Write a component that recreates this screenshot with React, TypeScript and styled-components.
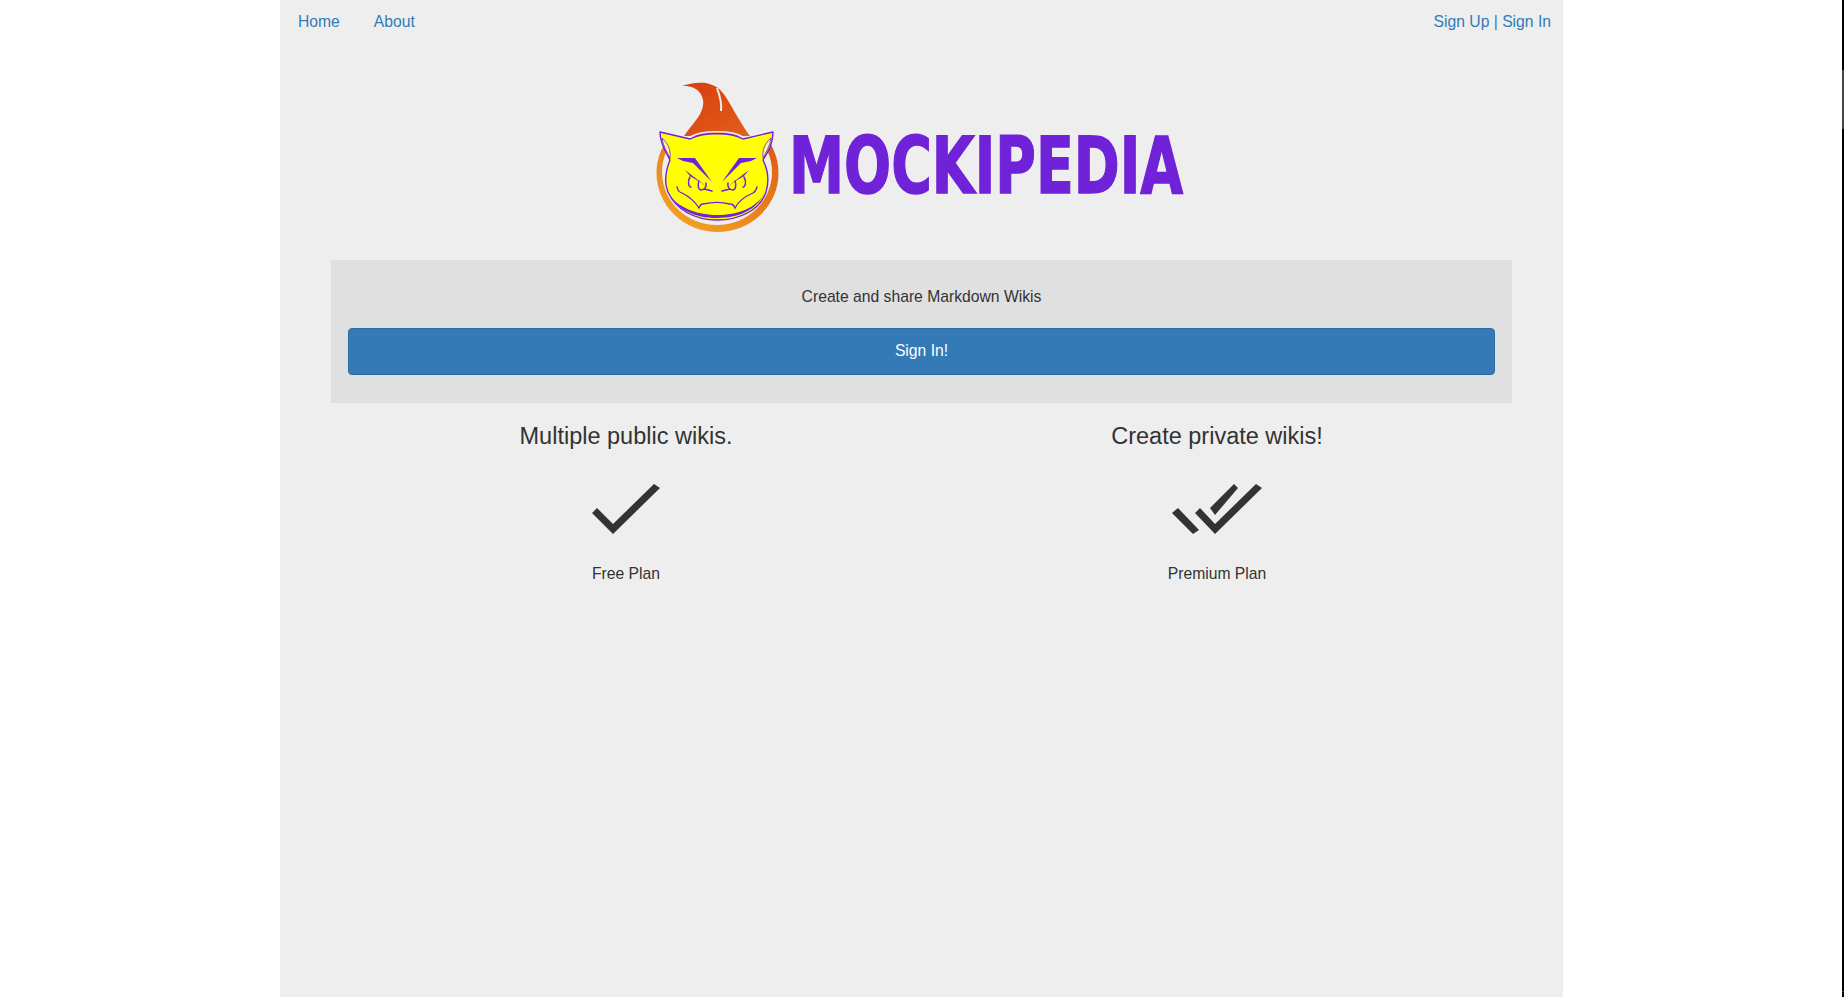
import React from "react";
import styled, { createGlobalStyle } from "styled-components";

const GlobalStyle = createGlobalStyle`
  html, body {
    margin: 0;
    padding: 0;
    background: #fff;
    overflow: hidden;
  }
  body {
    font-family: "Liberation Sans", Arial, sans-serif;
    font-size: 15.7px;
    line-height: 1.43;
    color: #333;
  }
`;

const Mascot = () => (
  <svg width="160" height="170" viewBox="0 0 160 170">
    <defs>
      <linearGradient id="flame" x1="0" y1="0" x2="1" y2="1">
        <stop offset="0" stopColor="#d83c0c" />
        <stop offset="1" stopColor="#e2601a" />
      </linearGradient>
      <linearGradient id="ring" x1="0.2" y1="1" x2="0.9" y2="0">
        <stop offset="0" stopColor="#f2a524" />
        <stop offset="1" stopColor="#dd4f12" />
      </linearGradient>
      <clipPath id="ringClip">
        <rect x="0" y="72" width="160" height="98" />
      </clipPath>
    </defs>
    <g clipPath="url(#ringClip)">
      <ellipse cx="77.5" cy="103" rx="61" ry="59" fill="url(#ring)" />
      <ellipse cx="77" cy="102" rx="55" ry="53" fill="#eee" />
    </g>
    <path
      d="M42 16 C48 14 58 12 66 13 C71 14 75 16 78 18 C88 26 94 44 110 66 L44 66 C54 52 61 46 63 36 C65 26 58 15 42 16 Z"
      fill="url(#flame)"
    />
    <path d="M77 18 C80 26 82 33 81 41" stroke="#eee" strokeWidth="2" fill="none" />
    <path
      d="M20 62 L50 69 C62 62 92 62 103 69 L133 62 C133 75 127 83 123 90 C128 100 129 112 126 122 C120 140 100 150 77 150 C55 150 36 140 28 122 C25 115 24 105 30 90 C28 85 20 75 20 62 Z"
      fill="#ffff00"
      stroke="#6f22d8"
      strokeWidth="1.4"
      strokeLinejoin="round"
    />
    <path d="M50 67 C62 60 92 60 103 67" fill="none" stroke="#f4f0fa" strokeWidth="1.5" />
    <path
      d="M27 120 C36 140 55 148 77 148 C100 148 118 140 126 120 C120 136 100 145 77 145 C55 145 34 136 27 120 Z"
      fill="#6f22d8"
    />
    <path d="M22 68 C23 76 27 82 30 88 C31 82 29 74 22 68 Z" fill="#fff7a0" stroke="#6f22d8" strokeWidth="0.8" />
    <path d="M131 68 C130 76 126 82 123 88 C122 82 124 74 131 68 Z" fill="#fff7a0" stroke="#6f22d8" strokeWidth="0.8" />
    <g fill="#6f22d8">
      <path d="M37 88 L55 88 L72 112 L53 93 L43 91 Z" />
      <path d="M117 88 L99 88 L82 112 L101 93 L111 91 Z" />
      <path d="M45 100 L71 120 L60 112 L50 106 Z" />
      <path d="M109 100 L83 120 L94 112 L104 106 Z" />
    </g>
    <g fill="none" stroke="#6f22d8" strokeLinecap="round">
      <path d="M50 107 C47 112 49 117 51 117" strokeWidth="1.5" />
      <path d="M104 107 C107 112 105 117 103 117" strokeWidth="1.5" />
      <path d="M59 111 C57 116 59 120 61 120 C65 120 67 116 66 113 M64 119 L72 121" strokeWidth="1.5" />
      <path d="M95 111 C97 116 95 120 93 120 C89 120 87 116 88 113 M90 119 L82 121" strokeWidth="1.5" />
      <path d="M37 117 C38 121 39 122 42 123 C48 126 54 130 59 138 C60 135 61 134 63 134 C72 132 82 132 90 134 C93 134 94 135 95 138 C99 130 106 126 113 123 C115 122 116 121 117 117" strokeWidth="1.3" />
    </g>
  </svg>
);

const Check = () => (
  <svg width="68" height="50" viewBox="0 0 68 50">
    <polygon fill="#333" points="0,29 5,24 21,40 62,0 68,4 21,50" />
  </svg>
);

const DoubleCheck = () => (
  <svg width="90" height="50" viewBox="0 0 90 50">
    <g fill="#333">
      <polygon points="0,29 6,24 27,46 21,50" />
      <polygon points="23,29 28,24 43,40 84,0 90,4 43,50" />
      <polygon points="38,24 62,0 66,4 43,31" />
    </g>
  </svg>
);

const App = () => {
  return (
    <>
      <GlobalStyle />
      <Page>
        <Container>
          <Nav>
            <NavLinks>
              <NavLink href="#">Home</NavLink>
              <NavLink href="#">About</NavLink>
            </NavLinks>
            <AuthLinks>
              <NavLink href="#">Sign Up</NavLink> | <NavLink href="#">Sign In</NavLink>
            </AuthLinks>
          </Nav>
          <LogoRow>
            <Mascot />
            <Wordmark>MOCKIPEDIA</Wordmark>
          </LogoRow>
          <Jumbotron>
            <Lead>Create and share Markdown Wikis</Lead>
            <SignInButton>Sign In!</SignInButton>
          </Jumbotron>
          <Plans>
            <Plan>
              <PlanTitle>Multiple public wikis.</PlanTitle>
              <PlanIcon>
                <Check />
              </PlanIcon>
              <PlanName>Free Plan</PlanName>
            </Plan>
            <Plan>
              <PlanTitle>Create private wikis!</PlanTitle>
              <PlanIcon>
                <DoubleCheck />
              </PlanIcon>
              <PlanName>Premium Plan</PlanName>
            </Plan>
          </Plans>
        </Container>
        <ScrollTrack>
          <ScrollThumb $top={70} $height={59} />
          <ScrollThumb $top={991} $height={1} />
        </ScrollTrack>
      </Page>
    </>
  );
};

const Page = styled.div`
  position: relative;
  display: flex;
  height: 997px;
  padding-left: 280px;
  box-sizing: border-box;
`;

const Container = styled.div`
  width: 1283px;
  background: #eeeeee;
`;

const Nav = styled.nav`
  display: flex;
  justify-content: space-between;
  padding: 11px 12px 0 18px;
  height: 42px;
  box-sizing: border-box;
`;

const NavLinks = styled.div`
  display: flex;
  gap: 34px;
`;

const AuthLinks = styled.div`
  color: #337ab7;
`;

const NavLink = styled.a`
  color: #337ab7;
  text-decoration: none;
`;

const LogoRow = styled.div`
  display: flex;
  align-items: flex-start;
  height: 218px;
  padding: 28px 0 0 360px;
  box-sizing: border-box;
`;

const Wordmark = styled.span`
  display: inline-block;
  margin: 57px 0 0 -11px;
  font-family: "DejaVu Sans", sans-serif;
  font-size: 78px;
  font-weight: 700;
  line-height: 78px;
  white-space: nowrap;
  color: #6f22d8;
  -webkit-text-stroke: 1.5px #6f22d8;
  transform: scaleX(0.71);
  transform-origin: left top;
`;

const Jumbotron = styled.div`
  margin: 0 51px;
  height: 143px;
  padding: 25px 17px 0;
  box-sizing: border-box;
  background: #e0e0e0;
`;

const Lead = styled.p`
  margin: 0 0 20px;
  text-align: center;
  line-height: 23px;
`;

const SignInButton = styled.button`
  display: block;
  width: 100%;
  height: 47px;
  padding: 0 0 2px;
  background: #337ab7;
  border: 1px solid #2e6da4;
  border-radius: 4px;
  color: #fff;
  font-family: inherit;
  font-size: 15.7px;
`;

const Plans = styled.div`
  display: grid;
  grid-template-columns: 590px 592px;
  margin: 0 51px;
`;

const Plan = styled.div`
  display: flex;
  flex-direction: column;
  align-items: center;
`;

const PlanTitle = styled.h3`
  margin: 20px 0 0;
  font-size: 23.5px;
  font-weight: 500;
  line-height: 27px;
`;

const PlanIcon = styled.div`
  display: flex;
  justify-content: center;
  margin-top: 34px;
  height: 50px;
`;

const PlanName = styled.p`
  margin: 28px 0 0;
  line-height: 23px;
`;

const ScrollTrack = styled.div`
  position: absolute;
  top: 0;
  right: 0;
  width: 2px;
  height: 997px;
  background: #000;
`;

const ScrollThumb = styled.div<{ $top: number; $height: number }>`
  position: absolute;
  left: 0;
  top: ${(p) => p.$top}px;
  width: 2px;
  height: ${(p) => p.$height}px;
  background: #444;
`;

export default App;
